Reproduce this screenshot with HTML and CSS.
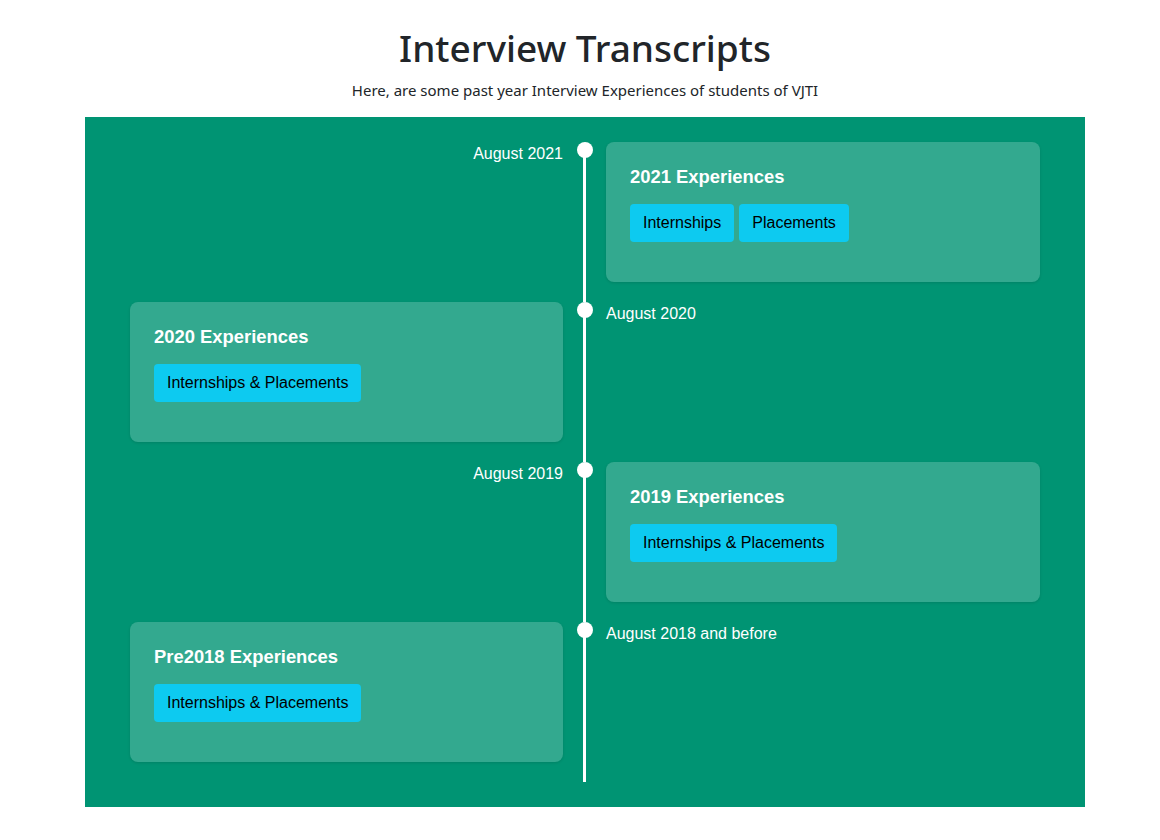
FILE: index.html
```html
<!DOCTYPE html>
<html lang="en">
<head>
<meta charset="utf-8">
<title>Interview Transcripts</title>
<link rel="stylesheet" href="styles.css">
</head>
<body>
<header class="intro">
  <h1 class="intro-title">Interview Transcripts</h1>
  <p class="intro-sub">Here, are some past year Interview Experiences of students of VJTI</p>
</header>
<section class="timeline-wrap">
  <div class="timeline">
    <div class="row">
      <div class="side side-left"><span class="date">August 2021</span></div>
      <div class="axis"><span class="dot"></span><span class="line"></span></div>
      <div class="side side-right">
        <div class="card">
          <h5 class="card-title">2021 Experiences</h5>
          <div class="btns"><a class="btn">Internships</a><a class="btn">Placements</a></div>
        </div>
      </div>
    </div>
    <div class="row">
      <div class="side side-left">
        <div class="card">
          <h5 class="card-title">2020 Experiences</h5>
          <div class="btns"><a class="btn">Internships &amp; Placements</a></div>
        </div>
      </div>
      <div class="axis"><span class="dot"></span><span class="line"></span></div>
      <div class="side side-right"><span class="date">August 2020</span></div>
    </div>
    <div class="row">
      <div class="side side-left"><span class="date">August 2019</span></div>
      <div class="axis"><span class="dot"></span><span class="line"></span></div>
      <div class="side side-right">
        <div class="card">
          <h5 class="card-title">2019 Experiences</h5>
          <div class="btns"><a class="btn">Internships &amp; Placements</a></div>
        </div>
      </div>
    </div>
    <div class="row">
      <div class="side side-left">
        <div class="card">
          <h5 class="card-title">Pre2018 Experiences</h5>
          <div class="btns"><a class="btn">Internships &amp; Placements</a></div>
        </div>
      </div>
      <div class="axis"><span class="dot"></span><span class="line"></span></div>
      <div class="side side-right"><span class="date">August 2018 and before</span></div>
    </div>
  </div>
</section>
</body>
</html>
```
FILE: styles.css
```css
* { box-sizing: border-box; }
body {
  margin: 0;
  padding-left: 10px;
  background: #fff;
  color: #212529;
  font-family: "Noto Sans", "Open Sans", sans-serif;
}
.intro {
  text-align: center;
  padding-top: 24px;
  height: 117px;
}
.intro-title {
  margin: 0;
  font-size: 37px;
  font-weight: 500;
  line-height: 48px;
}
.intro-sub {
  margin: 6px 0 0;
  font-size: 15px;
  line-height: 24px;
}
.timeline-wrap {
  width: 1000px;
  margin: 0 auto;
  background: #009473;
  padding: 25px 45px;
}
.timeline {
  display: flex;
  flex-direction: column;
  font-family: "Liberation Sans", Arial, sans-serif;
}
.row {
  display: grid;
  grid-template-columns: 433px 43px 1fr;
  height: 160px;
}
.side-left { text-align: right; }
.side-right { text-align: left; }
.date {
  display: block;
  color: #fff;
  font-size: 16px;
  line-height: 18px;
  padding-top: 3px;
}
.axis {
  display: flex;
  flex-direction: column;
  align-items: center;
  padding-left: 1px;
}
.dot {
  width: 16px;
  height: 16px;
  border-radius: 50%;
  background: #fff;
  flex: none;
}
.line {
  width: 3px;
  flex: 1;
  background: #fff;
  margin-top: -2px;
  margin-left: -1px;
}
.card {
  height: 140px;
  background: rgba(255, 255, 255, 0.2);
  border-radius: 8px;
  box-shadow: 0 1px 3px rgba(0, 0, 0, 0.12);
  padding: 24px 24px;
  text-align: left;
}
.card-title {
  margin: 0 0 16px;
  color: #fff;
  font-size: 18.4px;
  font-weight: 700;
  line-height: 22px;
}
.btns {
  display: flex;
  gap: 5px;
}
.btn {
  display: inline-block;
  background: #0dcaf0;
  color: #000;
  font-size: 16px;
  line-height: 24px;
  padding: 7px 13px;
  border-radius: 4px;
}
```
